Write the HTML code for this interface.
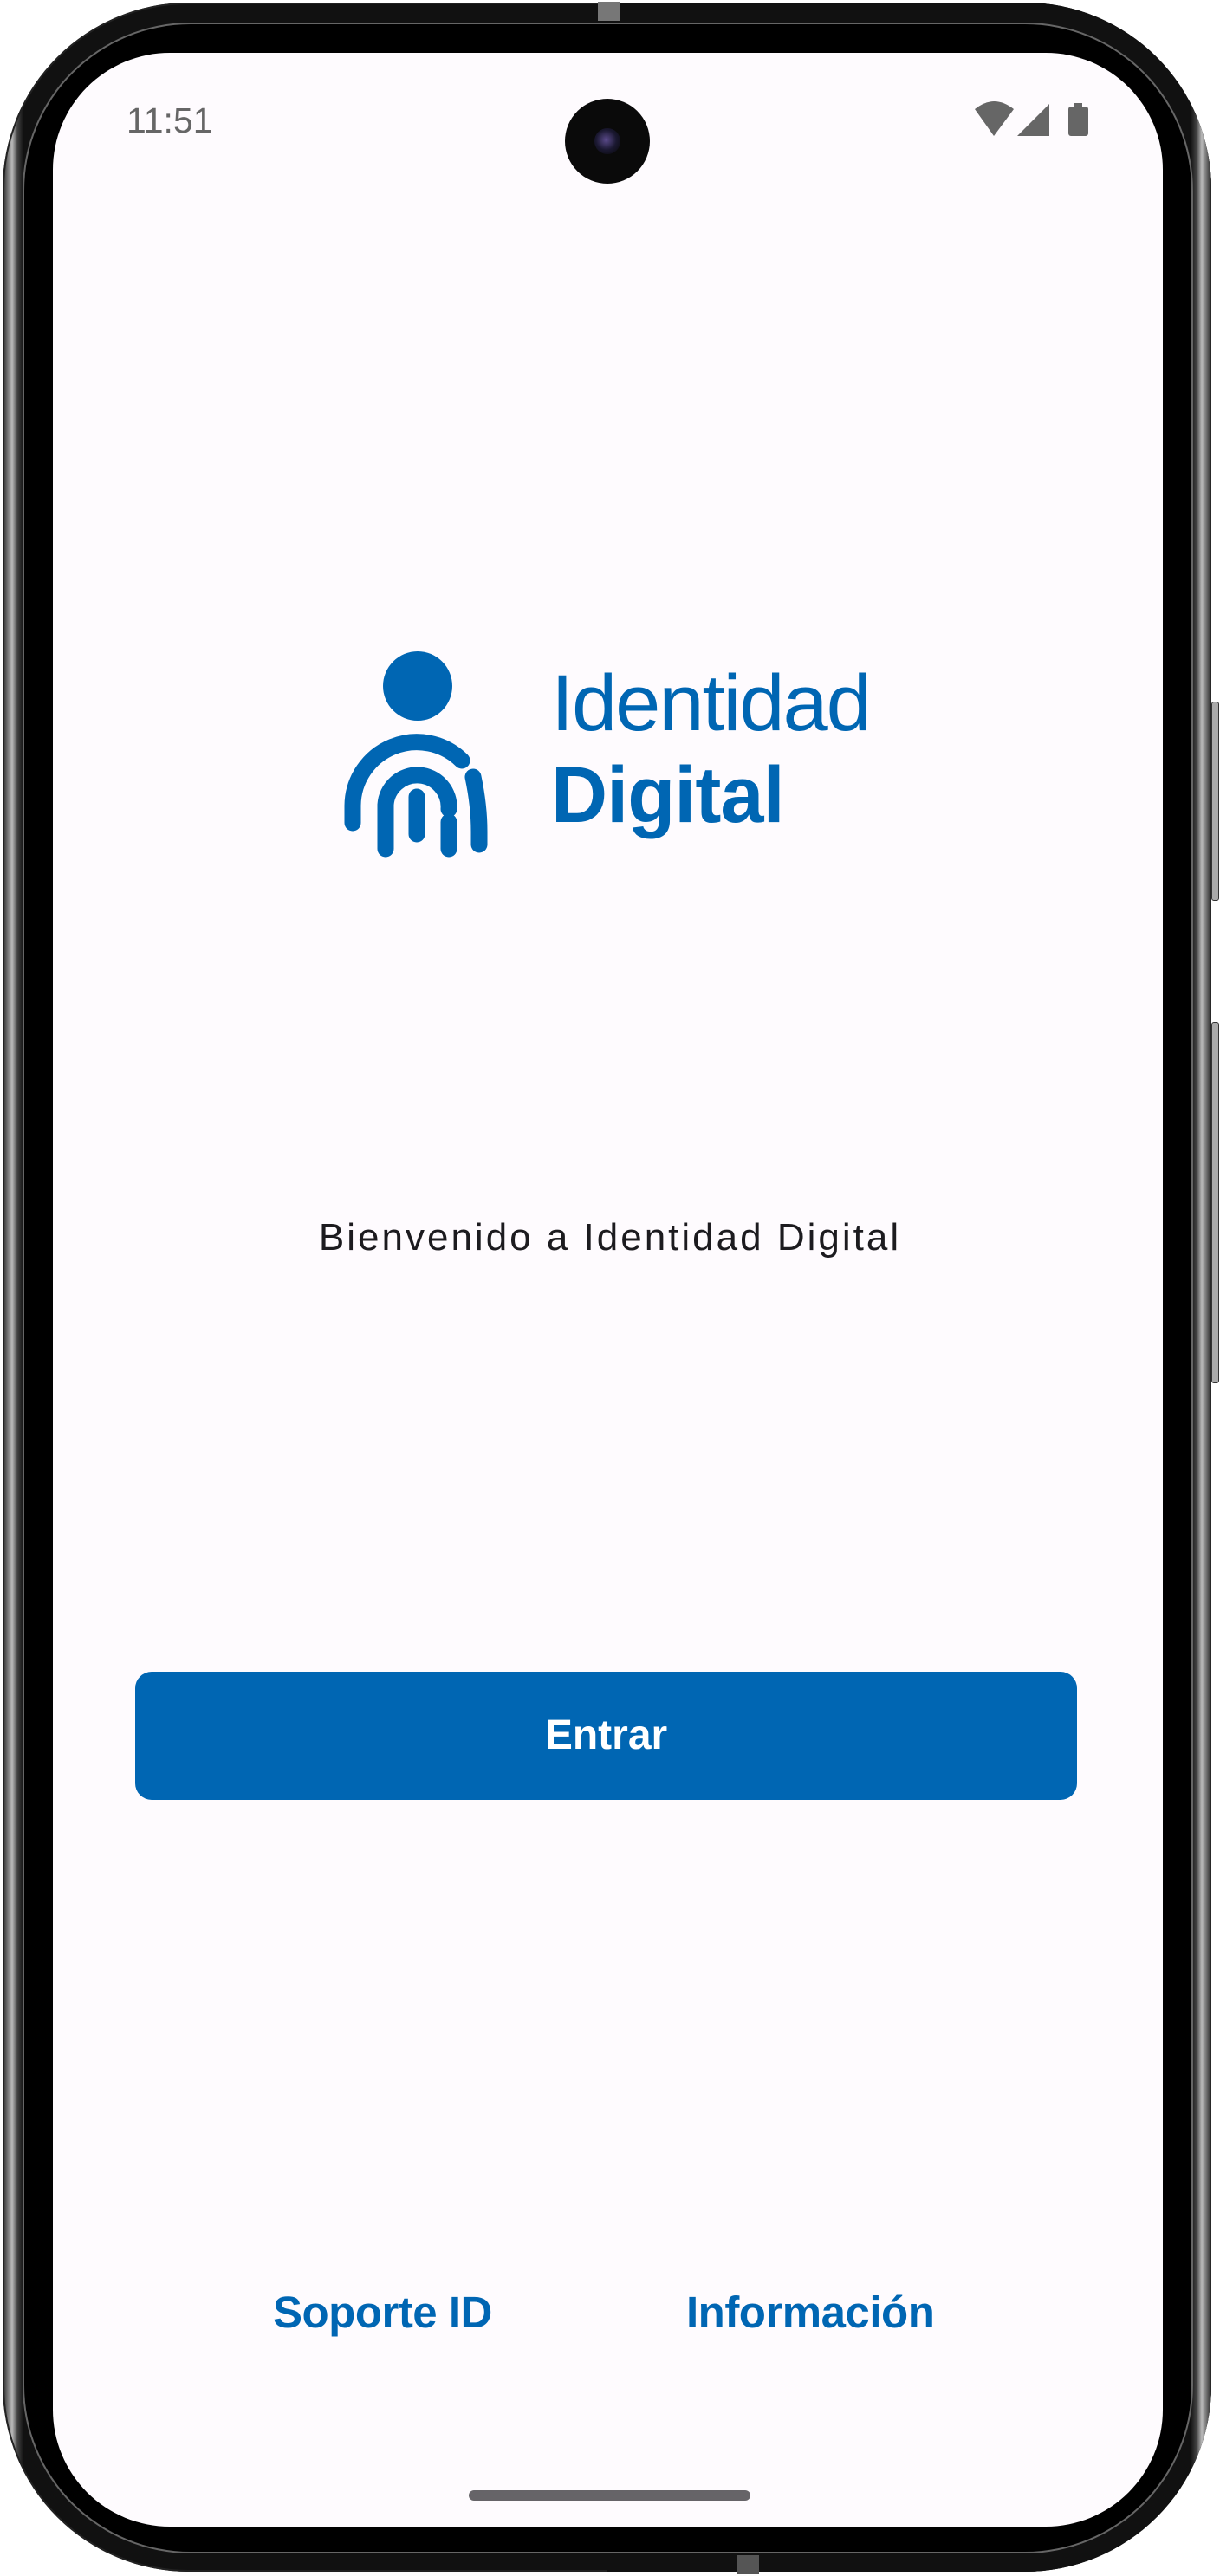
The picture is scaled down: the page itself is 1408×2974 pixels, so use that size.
<!DOCTYPE html>
<html><head><meta charset="utf-8"><style>
html,body{margin:0;padding:0;background:#fff;}
body{width:1408px;height:2974px;position:relative;overflow:hidden;font-family:"Liberation Sans",Roboto,sans-serif;}
.frame{position:absolute;left:3px;top:3px;width:1395px;height:2966px;border-radius:215px;background:linear-gradient(90deg,#222 0,#777 6px,#bbb 11px,#444 17px,#111 24px);box-shadow:inset 0 0 0 2px #222;}
.frame2{position:absolute;left:3px;top:3px;width:1395px;height:2966px;border-radius:215px;background:linear-gradient(270deg,#222 0,#777 6px,#bbb 11px,#444 17px,#111 24px);clip-path:inset(0 0 0 50%);}
.bezel{position:absolute;left:28px;top:28px;width:1347px;height:2918px;border-radius:192px;background:#000;box-shadow:0 0 0 2px #666;}
.screen{position:absolute;left:61px;top:61px;width:1281px;height:2856px;border-radius:135px;background:#fefbfe;}
.btn{position:absolute;background:#888;border-radius:3px;}
.t{position:absolute;white-space:nowrap;}
</style></head><body>
<div class="frame"></div><div class="frame2"></div>
<div class="btn" style="left:1398px;top:810px;width:7px;height:228px;background:#aaa;border:1px solid #333"></div>
<div class="btn" style="left:1398px;top:1180px;width:7px;height:415px;background:#aaa;border:1px solid #333"></div>
<div style="position:absolute;left:690px;top:2px;width:26px;height:22px;background:#777"></div>
<div style="position:absolute;left:850px;top:2950px;width:26px;height:22px;background:#555"></div>
<div class="bezel"></div>
<div class="screen"></div>

<div class="t" style="left:146px;top:116px;font-size:41px;color:#666;">11:51</div>
<div style="position:absolute;left:652px;top:114px;width:98px;height:98px;border-radius:50%;background:#0a0a0a;"></div>
<div style="position:absolute;left:686px;top:148px;width:30px;height:30px;border-radius:50%;background:radial-gradient(circle at 45% 45%,#5a4a8a 0,#1a1830 50%,#050505 100%);"></div>

<svg style="position:absolute;left:1120px;top:115px" width="145" height="48" viewBox="1120 115 145 48">
<path d="M1125 126 Q1147 108 1170 126 L1147 157 Z" fill="#666"/>
<path d="M1174 157 L1211 120 L1211 157 Z" fill="#666"/>
<rect x="1233" y="123" width="23" height="34" rx="3" fill="#666"/>
<rect x="1240" y="119" width="9" height="5" fill="#666"/>
</svg>

<svg style="position:absolute;left:0;top:0" width="1408" height="1100" viewBox="0 0 1408 1100">
<circle cx="482" cy="792" r="40" fill="#0066b3"/>
<g fill="none" stroke="#0066b3" stroke-width="19" stroke-linecap="round">
<path d="M407 950 L407 930 A74 74 0 0 1 533 878"/>
<path d="M546 897 Q553 930 553 960 L553 975"/>
<path d="M445 980 L445 929 A36 36 0 0 1 518 934"/>
<path d="M481 920 L481 963"/>
<path d="M518 949 L518 980"/>
</g>
</svg>
<div class="t" style="left:636px;top:760px;font-size:92px;color:#0066b3;letter-spacing:-2px;transform:scaleX(1.02);transform-origin:left;">Identidad</div>
<div class="t" style="left:636px;top:866px;font-size:92px;font-weight:bold;color:#0066b3;letter-spacing:-1px;transform:scaleX(0.98);transform-origin:left;">Digital</div>

<div class="t" style="left:0;width:1408px;text-align:center;top:1404px;font-size:44px;color:#1c1b1f;letter-spacing:3px;">Bienvenido a Identidad Digital</div>

<div style="position:absolute;left:156px;top:1930px;width:1087px;height:148px;border-radius:19px;background:#0066b3;color:#fff;font-weight:bold;font-size:48px;text-align:center;line-height:148px;">Entrar</div>

<div class="t" style="left:315px;top:2640px;font-size:51px;font-weight:bold;color:#0066b3;letter-spacing:-0.5px;">Soporte ID</div>
<div class="t" style="left:792px;top:2640px;font-size:51px;font-weight:bold;color:#0066b3;letter-spacing:-0.5px;">Información</div>

<div style="position:absolute;left:541px;top:2875px;width:325px;height:12px;border-radius:6px;background:#666468;"></div>
</body></html>
